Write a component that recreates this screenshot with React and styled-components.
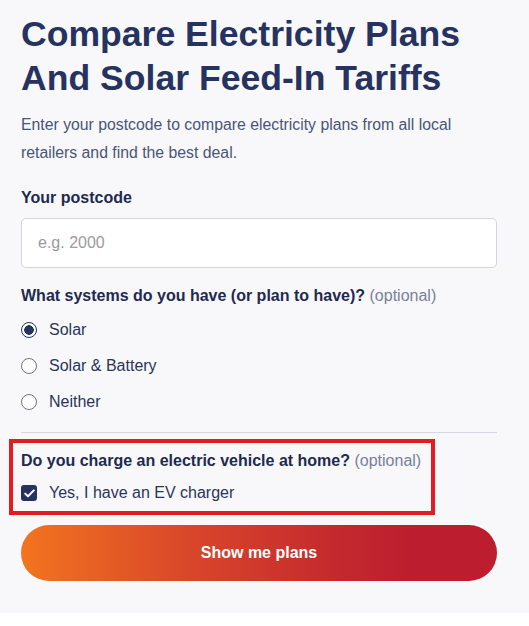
import React, { useState } from "react";
import styled, { createGlobalStyle } from "styled-components";

const GlobalStyle = createGlobalStyle`
  html, body {
    margin: 0;
    padding: 0;
    background: #ffffff;
  }
  body {
    font-family: "Liberation Sans", Arial, sans-serif;
  }
  * {
    box-sizing: border-box;
  }
`;

const Panel = styled.div`
  background: #f8f8fb;
  padding: 12px 32px 32px 21px;
  display: flex;
  flex-direction: column;
`;

const Title = styled.h1`
  margin: 0;
  font-size: 35.6px;
  line-height: 44px;
  font-weight: 700;
  color: #263360;
`;

const Intro = styled.p`
  margin: 11px 0 0;
  font-size: 15.8px;
  line-height: 28px;
  color: #4b5577;
`;

const Label = styled.div`
  font-size: 16px;
  line-height: 22px;
  font-weight: 700;
  color: #1f2a4f;
  margin-top: ${(p) => p.top || 0}px;
`;

const Optional = styled.span`
  font-weight: 400;
  color: #7a8099;
`;

const Input = styled.input`
  margin-top: 9px;
  width: 100%;
  height: 50px;
  border: 1px solid #d3d5dc;
  border-radius: 5px;
  background: #fff;
  padding: 0 16px;
  font-family: inherit;
  font-size: 16px;
  color: #1f2a4f;
  outline: none;

  &::placeholder {
    color: #9b9b9b;
  }
`;

const Options = styled.div`
  margin-top: 11px;
  display: flex;
  flex-direction: column;
  gap: 12px;
`;

const Option = styled.label`
  display: flex;
  align-items: center;
  gap: 12px;
  height: 24px;
  font-size: 16px;
  color: #2b355a;
  cursor: pointer;
`;

const Radio = styled.input.attrs({ type: "radio" })`
  appearance: none;
  margin: 0;
  width: 16px;
  height: 16px;
  border-radius: 50%;
  border: 1px solid #767676;
  background: #fff;
  flex-shrink: 0;

  &:checked {
    border: 1.5px solid #263360;
    background: radial-gradient(circle, #263360 0 4.5px, #fff 5px);
  }
`;

const Divider = styled.hr`
  margin: 18px 0 0;
  border: 0;
  border-top: 1px solid #d5d8e0;
  width: 100%;
`;

const Highlight = styled.div`
  margin: 6px 0 0 -12px;
  align-self: flex-start;
  border: 4px solid #e31b23;
  padding: 7px 10px 6px 8px;
  display: flex;
  flex-direction: column;
`;

const Check = styled.span`
  width: 16px;
  height: 16px;
  border-radius: 3px;
  background: #263360;
  display: flex;
  align-items: center;
  justify-content: center;
  flex-shrink: 0;
`;

const CheckRow = styled(Option)`
  margin-top: 9px;
`;

const Button = styled.button`
  margin-top: 10px;
  width: 100%;
  height: 56px;
  border: 0;
  border-radius: 28px;
  background: linear-gradient(90deg, #f2741f 0%, #d9472a 35%, #c52a2e 65%, #bd1e2f 82%, #bd1e2f 100%);
  color: #fff;
  font-family: inherit;
  font-size: 16px;
  font-weight: 700;
  cursor: pointer;
`;

const systems = ["Solar", "Solar & Battery", "Neither"];

export default function App() {
  const [system, setSystem] = useState("Solar");
  const [ev, setEv] = useState(true);

  return (
    <>
      <GlobalStyle />
      <Panel>
        <Title>
          Compare Electricity Plans
          <br />
          And Solar Feed-In Tariffs
        </Title>
        <Intro>
          Enter your postcode to compare electricity plans from all local
          <br />
          retailers and find the best deal.
        </Intro>

        <Label top={20}>Your postcode</Label>
        <Input placeholder="e.g. 2000" />

        <Label top={17}>
          What systems do you have (or plan to have)? <Optional>(optional)</Optional>
        </Label>
        <Options>
          {systems.map((s) => (
            <Option key={s}>
              <Radio
                name="system"
                checked={system === s}
                onChange={() => setSystem(s)}
              />
              {s}
            </Option>
          ))}
        </Options>

        <Divider />

        <Highlight>
          <Label>
            Do you charge an electric vehicle at home? <Optional>(optional)</Optional>
          </Label>
          <CheckRow onClick={() => setEv(!ev)}>
            <Check>
              {ev && (
                <svg width="11" height="9" viewBox="0 0 11 9">
                  <path
                    d="M1.2 4.6 L4 7.3 L9.8 1.4"
                    fill="none"
                    stroke="#fff"
                    strokeWidth="2"
                    strokeLinecap="round"
                    strokeLinejoin="round"
                  />
                </svg>
              )}
            </Check>
            Yes, I have an EV charger
          </CheckRow>
        </Highlight>

        <Button>Show me plans</Button>
      </Panel>
    </>
  );
}
